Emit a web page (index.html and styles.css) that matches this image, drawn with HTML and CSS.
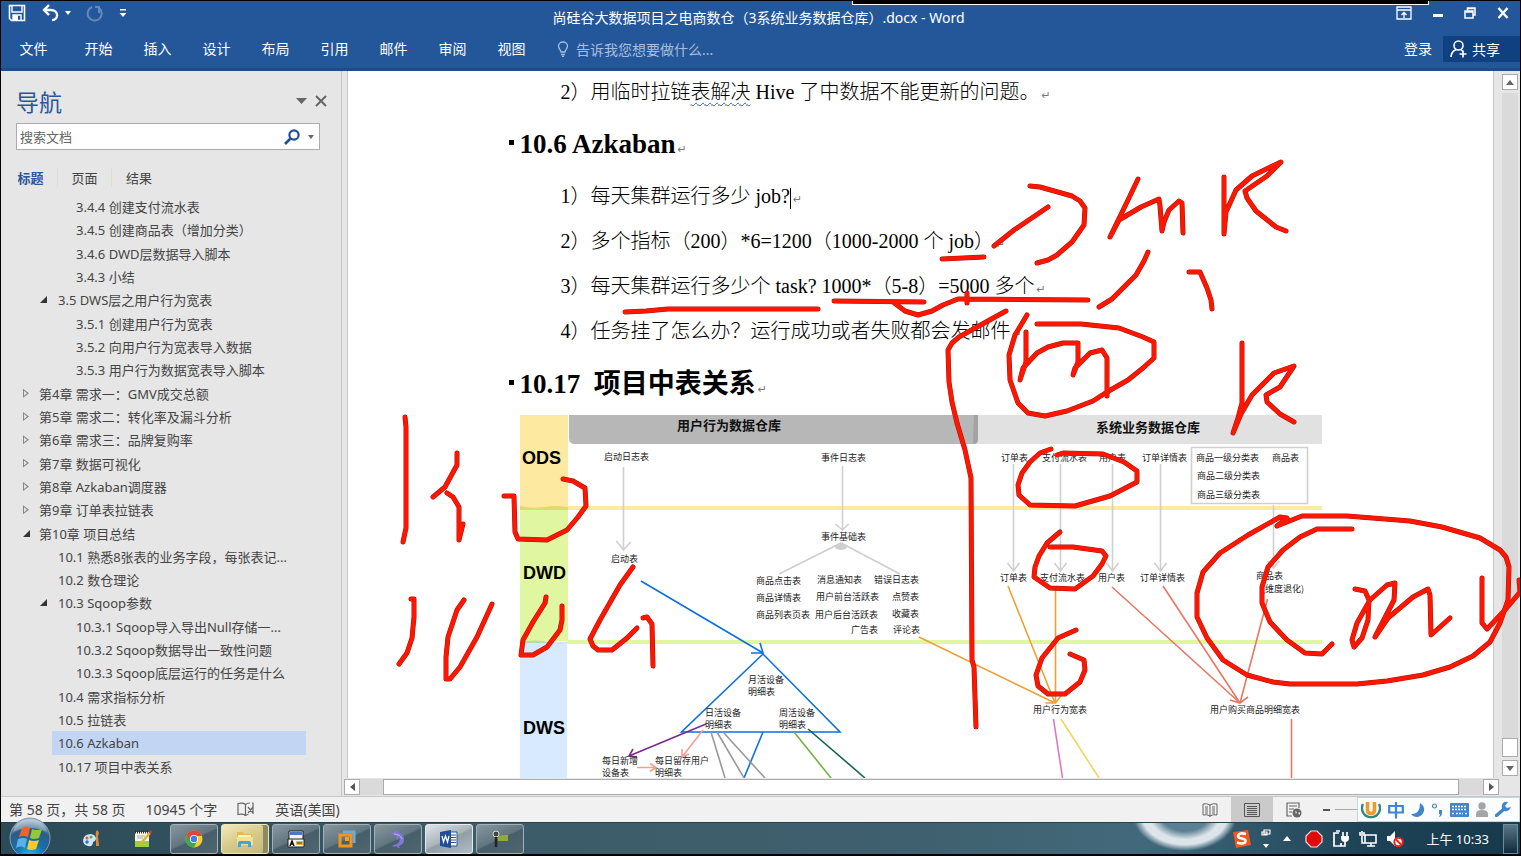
FILE: index.html
```html
<!DOCTYPE html>
<html lang="zh-CN">
<head>
<meta charset="utf-8">
<title>尚硅谷大数据项目之电商数仓（3系统业务数据仓库）.docx - Word</title>
<link rel="stylesheet" href="styles.css">
</head>
<body>
<header class="ribbon">
  <div class="titlebar">
    <div class="quick">
      <button class="icon-btn" aria-label="保存"><svg width="18" height="18" viewBox="0 0 18 18"><path d="M1.500 1.500h15v15h-13l-2-2z" fill="none" stroke="#fff" stroke-width="1.600"/><path d="M4 2v6h10V2M5 16v-5h8v5" fill="none" stroke="#fff" stroke-width="1.400"/><path d="M5 11h5v5H5z" fill="#fff"/></svg></button>
      <button class="icon-btn" aria-label="撤消"><svg width="30" height="18" viewBox="0 0 30 18"><path d="M8 1L3 6l5 5M3 6h7c8 0 8 10 1 10" fill="none" stroke="#fff" stroke-width="2.400"/><path d="M24 7h6l-3 4z" fill="#fff"/></svg></button>
      <button class="icon-btn" aria-label="重复"><svg width="18" height="18" viewBox="0 0 18 18"><path d="M6 3a7 7 0 1 0 7 1M13 9V3H9" fill="none" stroke="#6488bd" stroke-width="2"/></svg></button>
      <button class="icon-btn" aria-label="自定义"><svg width="8" height="10" viewBox="0 0 8 10"><path d="M1 1h6v1.500H1zM0.500 5h7L4 9z" fill="#fff"/></svg></button>
    </div>
    <h1 class="doc-title">尚硅谷大数据项目之电商数仓（3系统业务数据仓库）.docx - Word</h1>
    <div class="window-btns">
      <button class="icon-btn" aria-label="功能区选项"><svg width="16" height="14" viewBox="0 0 16 14"><path d="M1 1h14v12H1zM1 4h14M8 12V7M5.500 9L8 6.500 10.500 9" fill="none" stroke="#fff" stroke-width="1.300"/></svg></button>
      <button class="icon-btn" aria-label="最小化"><svg width="10" height="14" viewBox="0 0 10 14"><path d="M0 8h10v3H0z" fill="#fff"/></svg></button>
      <button class="icon-btn" aria-label="还原"><svg width="12" height="14" viewBox="0 0 12 14"><path d="M1 5h8v7H1zM3.500 4.500V2H11v7H9.500M1 6h8M4 2.600h7" fill="none" stroke="#fff" stroke-width="1.500"/></svg></button>
      <button class="icon-btn" aria-label="关闭"><svg width="12" height="14" viewBox="0 0 12 14"><path d="M1.500 2l9 10M10.500 2l-9 10" stroke="#fff" stroke-width="2.400"/></svg></button>
    </div>
    <div class="share-strip"></div>
  </div>
  <nav class="tabs">
    <button class="tab tab-file">文件</button>
    <button class="tab">开始</button>
    <button class="tab">插入</button>
    <button class="tab">设计</button>
    <button class="tab">布局</button>
    <button class="tab">引用</button>
    <button class="tab">邮件</button>
    <button class="tab">审阅</button>
    <button class="tab">视图</button>
    <button class="tell-me"><svg width="12" height="16" viewBox="0 0 12 16"><path d="M4 11C4 9 1.500 8 1.500 5a4.500 4 0 0 1 9 0C10.500 8 8 9 8 11zM4 13.500h4M5 15.300h2" fill="none" stroke="#a9bedd" stroke-width="1.300"/></svg>告诉我您想要做什么...</button>
    <button class="tab login">登录</button>
    <button class="share"><svg width="18" height="18" viewBox="0 0 18 18"><circle cx="8.500" cy="5.500" r="4.500" fill="none" stroke="#fff" stroke-width="1.600"/><path d="M1 17c0-4 2-6 5-7.500M11 9.500l2 2M13 10.500v7M9.500 14h7" fill="none" stroke="#fff" stroke-width="1.700"/></svg>共享</button>
  </nav>
</header>

<main class="work">
  <aside class="nav-pane">
    <div class="nav-head">
      <h2>导航</h2>
      <button class="icon-btn" aria-label="选项"><svg width="11" height="6" viewBox="0 0 11 6"><path d="M0 0h11L5.500 6z" fill="#666"/></svg></button>
      <button class="icon-btn" aria-label="关闭导航"><svg width="12" height="12" viewBox="0 0 12 12"><path d="M1 1l10 10M11 1L1 11" stroke="#666" stroke-width="2"/></svg></button>
    </div>
    <div class="search">
      <input type="text" placeholder="搜索文档" aria-label="搜索文档">
      <svg width="16" height="16" viewBox="0 0 16 16"><circle cx="10" cy="6" r="4.600" fill="none" stroke="#1f4e9c" stroke-width="2.200"/><path d="M6.500 9.500L1 15" stroke="#1f4e9c" stroke-width="2.600"/></svg>
      <svg width="6" height="4" viewBox="0 0 6 4"><path d="M0 0h6L3 4z" fill="#666"/></svg>
    </div>
    <div class="nav-tabs">
      <button class="on">标题</button><button>页面</button><button>结果</button>
    </div>
    <ul class="tree">
      <li class="l3"><a href="#">3.4.4 创建支付流水表</a></li>
      <li class="l3"><a href="#">3.4.5 创建商品表（增加分类）</a></li>
      <li class="l3"><a href="#">3.4.6 DWD层数据导入脚本</a></li>
      <li class="l3"><a href="#">3.4.3 小结</a></li>
      <li class="l2 open"><a href="#">3.5 DWS层之用户行为宽表</a></li>
      <li class="l3"><a href="#">3.5.1 创建用户行为宽表</a></li>
      <li class="l3"><a href="#">3.5.2 向用户行为宽表导入数据</a></li>
      <li class="l3"><a href="#">3.5.3 用户行为数据宽表导入脚本</a></li>
      <li class="l1 shut"><a href="#">第4章 需求一：GMV成交总额</a></li>
      <li class="l1 shut"><a href="#">第5章 需求二：转化率及漏斗分析</a></li>
      <li class="l1 shut"><a href="#">第6章 需求三：品牌复购率</a></li>
      <li class="l1 shut"><a href="#">第7章 数据可视化</a></li>
      <li class="l1 shut"><a href="#">第8章 Azkaban调度器</a></li>
      <li class="l1 shut"><a href="#">第9章 订单表拉链表</a></li>
      <li class="l1 open"><a href="#">第10章 项目总结</a></li>
      <li class="l2"><a href="#">10.1 熟悉8张表的业务字段，每张表记...</a></li>
      <li class="l2"><a href="#">10.2 数仓理论</a></li>
      <li class="l2 open"><a href="#">10.3 Sqoop参数</a></li>
      <li class="l3"><a href="#">10.3.1 Sqoop导入导出Null存储一...</a></li>
      <li class="l3"><a href="#">10.3.2 Sqoop数据导出一致性问题</a></li>
      <li class="l3"><a href="#">10.3.3 Sqoop底层运行的任务是什么</a></li>
      <li class="l2"><a href="#">10.4 需求指标分析</a></li>
      <li class="l2"><a href="#">10.5 拉链表</a></li>
      <li class="l2 current"><a href="#">10.6 Azkaban</a></li>
      <li class="l2"><a href="#">10.17 项目中表关系</a></li>
    </ul>
  </aside>

  <section class="doc">
    <article class="page">
      <div class="column">
        <p class="first">2）用临时拉链<span class="wavy">表解决</span> Hive 了中数据不能更新的问题。<i>↵</i></p>
        <h3>10.6 Azkaban<i>↵</i></h3>
        <p>1）每天集群运行多少 job?<span class="caret"></span><i>↵</i></p>
        <p>2）多个指标（200）*6=1200（1000-2000 个 job）<i>↵</i></p>
        <p>3）每天集群运行多少个 task? 1000*（5-8）=5000 多个<i>↵</i></p>
        <p>4）任务挂了怎么办？运行成功或者失败都会发邮件<i>↵</i></p>
        <h3>10.17&nbsp; 项目中表关系<i>↵</i></h3>
        <svg class="diagram" viewBox="520 414 802 364">
          <path d="M520 415h48v92h-48z" fill="#fee9a0"/>
          <path d="M520 507h48v134h-48z" fill="#e0f6a1"/>
          <path d="M520 642h47v136h-47z" fill="#d7eaff"/>
          <path d="M568 506h754v4H568z" fill="#fee9a0"/>
          <path d="M520 506q12 3 24 1t24 0v3h-48z" fill="#dedb70"/>
          <path d="M567 640h755v4H567z" fill="#e0f6a1"/>
          <path d="M520 642q16-3 30 0t17 0v1h-47z" fill="#b8dbb0"/>
          <path d="M974 415h348v29H974z" fill="#e1e1e1"/>
          <path d="M569 415h409v24q0 5-5 5H575q-6 0-6-6z" fill="#b7b7b7"/>
          <path d="M974 415h4v24q0 5-5 5z" fill="#a2a2a2"/>
          <g class="layer"><text x="522" y="464">ODS</text><text x="523" y="579">DWD</text><text x="523" y="734">DWS</text></g>
          <g class="head"><text x="677" y="430">用户行为数据仓库</text><text x="1096" y="432">系统业务数据仓库</text></g>
          <g fill="none" stroke-width="1.600" stroke="#cfcfcf">
            <path d="M623.500 467v83m-7-9l7 9 7-8M842.500 466v64m-7-6l7 6 6-6M779 574l62-31 59 31"/>
            <path d="M1013.500 464v107m-6-8l6 8 6-8M1060.500 464v107m-6-8l6 8 6-8M1112.500 464v107m-6-8l6 8 6-8M1160.500 464v107m-6-8l6 8 6-8M1273.500 505v63m-6-7l6 7 6-7"/>
            <path d="M1191.500 447.500h116v56h-116z"/>
          </g>
          <ellipse cx="841" cy="547" rx="6" ry="3" fill="#cfcfcf"/>
          <g fill="none" stroke-width="1.600">
            <path stroke="#0d70dd" d="M641 581l122 72m-12 0l12 0-3-10M763 654l-81.500 78H840zM763 732l-19 46"/>
            <path stroke="#999" d="M711 732l14 46M717 732l27 46M723 732l42 46"/>
            <path stroke="#76b041" d="M794 732l37 46"/>
            <path stroke="#12664f" d="M808 729l57 49"/>
            <path stroke="#7b2a8c" d="M706 724l-77 32m4-7l-4 7 8 1"/>
            <path stroke="#f2a092" d="M703 730l-21 27m0-8v8l7-3M637 767.500h19m-6-4l6 4-6 4"/>
            <path stroke="#eda035" d="M919 637l136 66M1008 586l47 117M1055.500 588v115m-10 0h10l6-8"/>
            <path stroke="#df77c1" d="M1053.500 719l9 59"/>
            <path stroke="#f3d55c" d="M1061 719l38 59"/>
            <path stroke="#e87763" d="M1112 587l128 116M1163 586l77 117M1267.500 599L1240 703m-10-3l10 3 8-6M1291.500 719v59"/>
          </g>
          <g class="node">
            <text x="604" y="460">启动日志表</text><text x="611" y="562">启动表</text>
            <text x="821" y="461">事件日志表</text><text x="821" y="540">事件基础表</text>
            <text x="756" y="584">商品点击表</text><text x="756" y="601">商品详情表</text><text x="756" y="618">商品列表页表</text>
            <text x="817" y="583">消息通知表</text><text x="816" y="600">用户前台活跃表</text><text x="815" y="618">用户后台活跃表</text><text x="851" y="633">广告表</text>
            <text x="874" y="583">错误日志表</text><text x="892" y="600">点赞表</text><text x="892" y="617">收藏表</text><text x="893" y="633">评论表</text>
            <text x="748" y="683">月活设备</text><text x="748" y="695">明细表</text>
            <text x="705" y="716">日活设备</text><text x="705" y="728">明细表</text>
            <text x="779" y="716">周活设备</text><text x="779" y="728">明细表</text>
            <text x="602" y="764">每日新增</text><text x="602" y="776">设备表</text>
            <text x="655" y="764">每日留存用户</text><text x="655" y="776">明细表</text>
            <text x="1001" y="461">订单表</text><text x="1042" y="461">支付流水表</text><text x="1099" y="461">用户表</text><text x="1142" y="461">订单详情表</text>
            <text x="1196" y="461">商品一级分类表</text><text x="1197" y="479">商品二级分类表</text><text x="1197" y="498">商品三级分类表</text><text x="1272" y="461">商品表</text>
            <text x="1000" y="581">订单表</text><text x="1040" y="581">支付流水表</text><text x="1098" y="581">用户表</text><text x="1140" y="581">订单详情表</text>
            <text x="1256" y="579">商品表</text><text x="1262" y="592">(维度退化)</text>
            <text x="1033" y="713">用户行为宽表</text><text x="1210" y="713">用户购买商品明细宽表</text>
          </g>
        </svg>
      </div>
    </article>
    <div class="vbar">
      <button aria-label="向上"><svg width="8" height="5" viewBox="0 0 8 5"><path d="M0 5h8L4 0z" fill="#666"/></svg></button>
      <div class="vtrack"><div class="vthumb"></div></div>
      <button aria-label="向下"><svg width="8" height="5" viewBox="0 0 8 5"><path d="M0 0h8L4 5z" fill="#666"/></svg></button>
    </div>
    <div class="hbar">
      <button aria-label="向左"><svg width="5" height="8" viewBox="0 0 5 8"><path d="M5 0v8L0 4z" fill="#555"/></svg></button>
      <div class="htrack"><div class="hthumb"></div></div>
      <button aria-label="向右"><svg width="5" height="8" viewBox="0 0 5 8"><path d="M0 0v8l5-4z" fill="#555"/></svg></button>
    </div>
  </section>
</main>

<footer class="status">
  <span>第 58 页，共 58 页</span>
  <span>10945 个字</span>
  <svg width="18" height="15" viewBox="0 0 18 15"><path d="M8.500 2.500Q6 .5 1 1.500v11q5-1 7.500 1 1-1 3-1M8.500 2.500v11M8.500 2.500Q10 1 13 1M11 5l5 6M16 5l-5 6M15 1h1v11" fill="none" stroke="#666" stroke-width="1.200"/></svg>
  <span>英语(美国)</span>
  <div class="views">
    <button aria-label="阅读视图"><svg width="16" height="16" viewBox="0 0 16 16"><path d="M8 3Q5 1 1 2v11q4-1 7 1 3-2 7-1V2q-4-1-7 1zM8 3v12M3 5h3M3 7h3M3 9h3M3 11h3M10 5h3M10 7h3M10 9h3M10 11h3" fill="none" stroke="#666" stroke-width="1"/></svg></button>
    <button class="on" aria-label="页面视图"><svg width="16" height="16" viewBox="0 0 16 16"><path d="M.5 1.500h15v13H.5zM3 4.500h10M3 6.500h10M3 8.500h10M3 10.500h10M3 12.500h10" fill="none" stroke="#555" stroke-width="1"/></svg></button>
    <button aria-label="Web 版式"><svg width="16" height="16" viewBox="0 0 16 16"><path d="M6 14H1V1h12v5M3 4h8M3 7h5M3 10h3" fill="none" stroke="#666" stroke-width="1.200"/><circle cx="11" cy="11" r="4.500" fill="#666"/><path d="M9 9l2 1-1 2zM12 11l2-1v3z" fill="#eee"/></svg></button>
  </div>
  <button class="zoom-out" aria-label="缩小"></button>
  <div class="zoom-line"></div>
  <div class="ime">
    <svg width="20" height="20" viewBox="0 0 20 20"><path d="M2 4a9 9 0 1 0 16 0" fill="none" stroke="#2f8a7a" stroke-width="2.400"/><path d="M6.500 2v8q0 3.500 3.500 3.500t3.500-3.500V2" fill="none" stroke="#f19a2b" stroke-width="3.600"/></svg>
    <svg width="16" height="18" viewBox="0 0 16 18"><path d="M1.200 5h13.600v6.500H1.200zM8 1v16.500" fill="none" stroke="#3f85cf" stroke-width="2.200"/></svg>
    <svg width="14" height="14" viewBox="0 0 14 14"><path d="M9 0q5 3 4 8-2 6-8 6-3 0-5-3 9 1 9-11z" fill="#3f85cf"/></svg>
    <svg width="12" height="14" viewBox="0 0 12 14"><circle cx="3.500" cy="3" r="2" fill="none" stroke="#3f85cf" stroke-width="1.200"/><path d="M8 7h3v3q0 3-3 4 1-2 1-3H8z" fill="#3f85cf"/></svg>
    <svg width="19" height="14" viewBox="0 0 19 14"><rect width="19" height="14" rx="1" fill="#3f85cf"/><path d="M2 3.500h15M2 6.500h15M2 10.500h2M6 10.500h7M15 10.500h2" stroke="#fff" stroke-width="1.600" stroke-dasharray="2 1"/></svg>
    <svg width="12" height="15" viewBox="0 0 12 15"><circle cx="6" cy="4" r="3.700" fill="#a5a5a5"/><path d="M0 15v-3q0-4 6-4t6 4v3z" fill="#a5a5a5"/></svg>
    <svg width="16" height="15" viewBox="0 0 16 15"><path d="M1.500 13.500L9 7" stroke="#3f85cf" stroke-width="3.400" stroke-linecap="round"/><path d="M13 0q-5-1-6 3t2 6q5 1 7-4l-4 1-2-2z" fill="#3f85cf"/></svg>
  </div>
</footer>

<footer class="taskbar">
  <button class="orb" aria-label="开始菜单"><svg width="42" height="42" viewBox="0 0 42 42"><defs><radialGradient id="orb" cx=".5" cy="1" r=".95"><stop offset="0" stop-color="#23c6f5"/><stop offset=".4" stop-color="#1672ad"/><stop offset=".75" stop-color="#2b5c85"/><stop offset="1" stop-color="#9fb9cc"/></radialGradient></defs><circle cx="21" cy="21" r="20" fill="url(#orb)" stroke="#7f9db1" stroke-width="1"/><path d="M4 15Q7 3 21 2q14 1 17 13-17-8-34 0z" fill="#fff" opacity=".28"/><path d="M13 11q5-3 8 0l-2 9q-4-2-9 0z" fill="#f0632a"/><path d="M23 12q4 2 10 0l-3 9q-5 2-9 0z" fill="#94c83d"/><path d="M9 22q6-2 9 0l-2 9q-4-3-9 0z" fill="#59b0ea"/><path d="M20 23q5 2 10 0l-3 9q-5 2-9 0z" fill="#fcc82c"/></svg></button>
  <button class="pin" aria-label="画图"><svg width="20" height="20" viewBox="0 0 20 20"><path d="M1 11q1-6 8-6 5 1 5 5-1 3-3 3 0 5-5 4-5-1-5-6z" fill="#cfe6f5"/><circle cx="5" cy="9" r="1.500" fill="#e8543f"/><circle cx="9" cy="8" r="1.500" fill="#52b043"/><circle cx="5" cy="13" r="1.700" fill="#2a77cc"/><path d="M15 1q3 2 1 6l1 10h-3V7q-1-4 1-6z" fill="#e08a35"/></svg></button>
  <button class="pin" aria-label="记事本"><svg width="20" height="20" viewBox="0 0 20 20"><path d="M2 3h14v14H2z" fill="#f7f7e8"/><path d="M2 12h14v6H2z" fill="#9bd03e"/><path d="M2 3h14" stroke="#333" stroke-width="3" stroke-dasharray="1 1"/><path d="M4 7h8M4 9h6" stroke="#aaa"/><path d="M17 4l-8 9-1 3" fill="none" stroke="#e7b32e" stroke-width="2.500"/><path d="M16 3l2-2 1 2-2 2z" fill="#d33"/></svg></button>
  <button class="app" aria-label="Chrome"><svg width="18" height="18" viewBox="0 0 18 18"><circle cx="9" cy="9" r="8.500" fill="#f7cc2f"/><path d="M1.500 5A8.500 8.500 0 0 1 17 6H9l-4 5z" fill="#e2453a"/><path d="M1.500 5A8.500 8.500 0 0 0 9 17.500l3-6-6-.5z" fill="#3fa753"/><circle cx="9" cy="9" r="4" fill="#fff"/><circle cx="9" cy="9" r="3.200" fill="#3c80e8"/></svg></button>
  <button class="app folder" aria-label="资源管理器"><svg width="20" height="18" viewBox="0 0 20 18"><path d="M2 2h6l1 2h8v11H2z" fill="#e5b94a"/><path d="M3 5h13v3H3z" fill="#fff3c4"/><path d="M2 7h16v8H2z" fill="#f9df8c"/><path d="M3 17v-4q0-2 2-2h9q2 0 2 2v4h-3v-3H6v3z" fill="#3fa5de"/></svg></button>
  <button class="app" aria-label="工具"><svg width="18" height="18" viewBox="0 0 18 18"><path d="M2 1h14v10H2z" fill="#f4f4f4" stroke="#222"/><path d="M3 2h12v3H3z" fill="#4b79bd"/><path d="M1 9h16v8H1z" fill="#f5f5f5" stroke="#222"/><path d="M3 16l2-5 2 5M4 14h2" fill="none" stroke="#111" stroke-width="1.500"/><path d="M9 11h7v4H9z" fill="#f2b234"/><path d="M10 13h5" stroke="#333"/></svg></button>
  <button class="app" aria-label="VMware"><svg width="18" height="18" viewBox="0 0 18 18"><path d="M5 2h11v11" fill="none" stroke="#71acd8" stroke-width="3"/><path d="M2 5h11v11H2z" fill="none" stroke="#f39321" stroke-width="3"/><path d="M7 7h4v4H7z" fill="#e7a33c"/></svg></button>
  <button class="app" aria-label="海豚"><svg width="18" height="18" viewBox="0 0 18 18"><path d="M1 4q2-1 4-2 2-2 4-1l-1 1q6 1 7 6 1 6-5 8l1 2q-3 0-4-2-2 1-4 0 3-2 5-2 4-3 2-7l-1 3q-2-1-2-4-3-1-6-2z" fill="#7f78d2"/><path d="M5 4q6 0 8 5" stroke="#b8b3e4" fill="none"/></svg></button>
  <button class="app active" aria-label="Word"><svg width="18" height="18" viewBox="0 0 18 18"><path d="M9 2h8v14H9z" fill="#fff" stroke="#2b579a"/><path d="M11 5h5M11 7.500h5M11 10h5M11 12.500h5" stroke="#2b579a"/><path d="M0 2l11-2v18L0 16z" fill="#1f4e98"/><path d="M2 6l1.500 6L5.500 6l2 6L9 6" fill="none" stroke="#fff" stroke-width="1.300"/></svg></button>
  <button class="app" aria-label="钥匙"><svg width="18" height="18" viewBox="0 0 18 18"><circle cx="5" cy="4" r="3" fill="#444" stroke="#ddd"/><path d="M5 7v10" stroke="#222" stroke-width="2.500"/><path d="M7 6h3v5H7zM10 5h7v6h-7z" fill="#91a83b"/></svg></button>
  <div class="tray">
    <svg width="20" height="20" viewBox="0 0 20 20"><path d="M1 3l15-2 3 15-15 3z" fill="#f1571c"/><path d="M14 5Q7 3 6 7q0 2 4 2.500 5 1 3 4-3 2-8 0" fill="none" stroke="#fff" stroke-width="2.600"/></svg>
    <svg width="10" height="20" viewBox="0 0 10 20"><path d="M3 1h6v4H3zM1 3h5v3H1z" fill="none" stroke="#fff" stroke-width="1.200"/><path d="M2 15h6l-3 4z" fill="#fff"/></svg>
    <svg class="more" width="8" height="5" viewBox="0 0 8 5"><path d="M0 5h8L4 0z" fill="#fff"/></svg>
    <svg width="18" height="18" viewBox="0 0 18 18"><path d="M6 1h6l5 5v6l-5 5H6l-5-5V6z" fill="#e00b0b" stroke="#f2dcdc" stroke-width="1.200"/></svg>
    <svg width="18" height="18" viewBox="0 0 18 18"><path d="M7 3H2v13h7v-3M4 1h4M11 2v4M15 2v4M13 12v4H9" fill="none" stroke="#fff" stroke-width="1.700"/><path d="M9 6h8v2q0 4-4 4t-4-4z" fill="#fff"/></svg>
    <svg width="18" height="18" viewBox="0 0 18 18"><path d="M6 5h11v8H6zM8 16h8M12 13v3M3 6v7h3M1 2v3h4V2M3 1v3" fill="none" stroke="#fff" stroke-width="1.600"/></svg>
    <svg width="18" height="18" viewBox="0 0 18 18"><path d="M1 6h3l5-5v15l-5-5H1z" fill="#fff"/><circle cx="12.500" cy="12" r="4.200" fill="#fff" stroke="#de2b1f" stroke-width="2"/><path d="M9.500 9l6 6" stroke="#de2b1f" stroke-width="2"/></svg>
    <time>上午 10:33</time>
    <button class="peek" aria-label="显示桌面"></button>
  </div>
</footer>

<svg class="ink" viewBox="0 0 1521 856" preserveAspectRatio="xMinYMin meet" aria-hidden="true">
  <defs><g id="strokes">
    <path d="M942 259L984 257M994 246L1014 230 1048 207M1030 186L1040 187 1072 196 1080 201 1085 208 1084 225 1072 242 1057 255 1048 260 1037 263"/>
    <path d="M1138 179L1128 200 1110 237 1119 220 1141 207 1159 199 1160 206 1162 231 1164 222 1169 210 1179 201 1182 203 1183 233"/>
    <path d="M1224 177V234L1226 212 1236 190 1252 176 1281 162 1267 176 1245 191 1247 198 1256 211 1276 227 1286 231"/>
    <path d="M1148 252L1144 261 1136 275 1112 299 1099 307M1189 272H1200L1207 288 1211 300 1212 309"/>
    <path d="M625 312L646 311 668 309H818M834 301L924 302M893 302L905 311 918 315 932 311 943 305 958 299H967V293 303 299L1088 300"/>
    <path d="M1006 311L986 322 959 337 952 343 948 350 949 382 952 402 957 423 965 450 971 478 972 660 974 667 976 727"/>
    <path d="M1027 315L1015 335 1009 355 1010 380 1018 403 1028 413 1045 416 1067 411 1093 401 1107 392 1128 380 1143 368 1154 358V342L1143 337 1119 328 1081 324 1037 324"/>
    <path d="M1026 332V362L1020 380 1023 368 1037 353 1048 347 1063 343H1078V362L1073 375 1075 368 1090 353 1102 350 1107 358V396"/>
    <path d="M1242 343V403L1238 418 1233 433 1241 414 1252 395 1274 373 1294 366 1280 387 1266 395 1267 402 1280 414 1294 422"/>
    <path d="M1051 449L1040 453 1030 462 1022 473 1018 485 1019 495 1030 505 1075 506 1110 496 1137 482V471L1124 462 1103 454 1063 453 1057 455"/>
    <path d="M1060 532L1047 543 1039 556 1035 567 1034 577 1050 588 1075 589 1093 576 1102 564 1106 556 1102 551 1073 547H1050"/>
    <path d="M1076 630L1058 638 1042 658 1036 675 1038 686 1048 694H1065L1080 682 1085 670 1084 660 1070 654"/>
    <path d="M405 417L406 427V528L403 542M457 453V465L445 487 433 497M447 493L453 497 459 507V540L463 524"/>
    <path d="M504 496H514L515 532 518 539 547 540 567 530 578 517 586 506 585 488 573 481 563 479"/>
    <path d="M411 599H414V617L412 638 407 653 399 664M464 600L457 610 448 637 446 657V679H450L460 667 477 637 492 604"/>
    <path d="M546 597L545 603 533 622 523 640 521 655H533L547 647 560 630 562 620V606"/>
    <path d="M633 567L620 585 600 620 590 639 593 646 598 650H612L627 638 637 628M643 618L647 617 652 624 653 666"/>
    <path d="M1277 526L1287 518 1280 517 1248 535 1220 553 1203 572 1197 593V617L1207 638 1223 660 1247 675 1273 682 1290 684H1357L1387 681 1423 675 1450 667 1473 656 1490 642 1500 623 1508 600 1509 567 1506 557 1500 550 1480 538 1442 527 1410 521 1347 516H1302L1277 526"/>
    <path d="M1352 529H1317L1300 537 1283 550 1268 567 1262 587V603L1270 622 1287 640 1305 653 1322 654 1332 644"/>
    <path d="M1355 589L1365 591 1369 600 1368 620 1362 638 1354 647 1352 640 1357 623 1370 600 1387 585 1395 583 1394 600 1375 637 1388 618 1413 597 1428 589 1430 595 1431 635 1450 618"/>
    <path d="M1482 578V623L1487 629 1505 610 1520 592 1519 580"/>
  </g></defs>
  <use href="#strokes" class="ink-edge"/>
  <use href="#strokes" class="ink-core"/>
</svg>
</body>
</html>
```

FILE: styles.css
```css
* { box-sizing: border-box; }

body {
  margin: 0;
  height: 100vh;
  display: flex;
  flex-direction: column;
  overflow: hidden;
  position: relative;
  border: 1px solid #000;
  border-bottom-width: 2px;
  background: #e6e6e6;
  color: #444;
  font: 13px "Noto Sans", "Noto Sans CJK SC", sans-serif;
}

h1, h2, h3, p, ul { margin: 0; padding: 0; }
button { font: inherit; color: inherit; background: none; border: 0; padding: 0; }
svg { display: block; flex: none; }

/* ribbon */
.ribbon {
  flex: none;
  height: 70px;
  background: #245799;
  border-bottom: 3px solid #1d4c8b;
  color: #fff;
}
.titlebar {
  height: 33px;
  display: flex;
  justify-content: space-between;
  position: relative;
}
.quick { flex: 1; display: flex; align-items: center; gap: 15px; padding: 0 0 9px 7px; }
.doc-title { font-size: 14px; font-weight: 400; line-height: 34px; white-space: nowrap; }
.window-btns { flex: 1; display: flex; justify-content: flex-end; align-items: center; gap: 21px; padding: 0 11px 9px 0; }
.share-strip {
  position: absolute;
  top: -1px;
  left: 56%;
  right: 6%;
  height: 5px;
  background: #000;
  border: 1px solid #fff;
  border-top: 0;
}
.tabs { display: flex; align-items: center; height: 29px; font-size: 14px; padding-left: 3px; }
.tab { width: 59px; line-height: 26px; flex: none; }
.tab-file { margin-right: 6px; }
.tell-me { display: flex; align-items: center; gap: 7px; margin-left: 16px; color: #a9bedd; }
.login { margin-left: auto; width: 50px; }
.share {
  display: flex;
  align-items: center;
  gap: 4px;
  height: 26px;
  width: 77px;
  padding-left: 7px;
  background: #0f4080;
}

/* navigation pane */
.work { flex: 1; min-height: 0; display: flex; }
.nav-pane {
  width: 341px;
  flex: none;
  display: flex;
  flex-direction: column;
  padding: 11px 21px 18px 0;
  border-right: 1px solid #c6c6c6;
}
.nav-head { display: flex; align-items: center; gap: 8px; padding: 0 0 4px 15px; height: 41px; margin-right: -7px; }
.nav-head h2 { flex: 1; font-size: 23px; font-weight: 400; color: #2a5699; }
.search {
  display: flex;
  align-items: center;
  gap: 8px;
  height: 27px;
  margin-left: 15px;
  padding: 0 5px 0 3px;
  background: #fff;
  border: 1px solid #ababab;
}
.search input { flex: 1; min-width: 0; border: 0; padding: 0; outline: 0; font: inherit; }
.search input::placeholder { color: #666; opacity: 1; }
.nav-tabs { display: flex; height: 45px; align-items: center; padding-left: 3px; padding-top: 9px; }
.nav-tabs button { width: 54px; border-right: 1px solid #dcdcdc; }
.nav-tabs button:last-child { border: 0; }
.nav-tabs .on { color: #2a5699; font-weight: 700; }
.tree { flex: 1; min-height: 0; display: flex; flex-direction: column; list-style: none; }
.tree li { flex: 1; display: flex; align-items: center; position: relative; margin-right: 14px; }
.tree a { color: inherit; text-decoration: none; white-space: nowrap; }
.l1 { padding-left: 16px; margin-left: 22px; }
.l2 { padding-left: 6px; margin-left: 51px; }
.l3 { padding-left: 24px; margin-left: 51px; }
.open::before, .shut::before { content: ""; position: absolute; }
.l1::before { left: 0; }
.l2::before { left: -12px; }
.open::before { border-left: 7px solid transparent; border-bottom: 7px solid #333; }
.shut::before { width: 6px; height: 9px; background: #888; clip-path: polygon(0 0, 100% 50%, 0 100%, 0 0, 1px 2px, 1px 7px, 4px 50%, 1px 2px); }
.current { background: #c2d5f2; }

/* document */
.doc { flex: 1; min-width: 0; display: grid; grid-template-columns: 1fr 26px; grid-template-rows: 1fr 18px; }
.page {
  margin-left: 5px;
  min-height: 0;
  overflow: hidden;
  background: #fff;
  border-left: 1px solid #c6c6c6;
  border-right: 1px solid #c6c6c6;
  color: #000;
  font: 20px "Liberation Serif", "Noto Sans CJK SC", serif;
}
.column { max-width: 802px; margin: 0 auto; }
.column p { line-height: 45px; padding-left: 41px; white-space: nowrap; font-weight: 300; }
.column .first { line-height: 43px; }
.column h3 { font-size: 27px; line-height: 60px; position: relative; white-space: nowrap; }
.column h3::before { content: ""; position: absolute; left: -11px; top: 26px; width: 5px; height: 5px; background: #000; }
.column i { font: 11px "DejaVu Sans", sans-serif; color: #777; margin-left: 2px; }
.wavy { text-decoration: underline wavy #3355dd 1px; text-underline-offset: 3px; }
.caret { display: inline-block; width: 1px; height: 21px; background: #000; vertical-align: middle; }
.diagram { width: 100%; }
.diagram text { font-family: "Noto Sans CJK SC", sans-serif; fill: #222; }
.diagram .node text { font-size: 9px; }
.diagram .head text { font-size: 13px; font-weight: 700; fill: #111; }
.diagram .layer text { font: 700 18px "Liberation Sans", sans-serif; fill: #000; }

/* scroll bars */
.vbar { display: flex; flex-direction: column; width: 16px; margin: 3px 0 2px 8px; gap: 3px; }
.vbar button, .hbar button {
  width: 16px;
  height: 16px;
  flex: none;
  display: grid;
  place-items: center;
  background: #fff;
  border: 1px solid #ababab;
}
.vtrack { flex: 1; display: flex; align-items: flex-end; background: #dadada; }
.vthumb { width: 16px; height: 19px; background: #fff; border: 1px solid #ababab; }
.hbar { grid-column: 1 / 3; display: flex; padding: 1px 21px 1px 2px; }
.htrack { flex: 1; display: flex; padding: 0 24px 0 23px; background: #dadada; }
.hthumb { flex: 1; background: #fff; border: 1px solid #ababab; }

/* status bar */
.status {
  flex: none;
  height: 26px;
  display: flex;
  align-items: center;
  gap: 20px;
  padding-left: 8px;
  background: #f1f1f1;
  border-top: 1px solid #c6c6c6;
  white-space: nowrap;
  font-size: 14px;
  line-height: 20px;
}
.views { margin-left: auto; display: flex; align-self: stretch; }
.views button { width: 42px; display: grid; place-items: center; }
.views .on { background: #cacaca; }
.zoom-out { width: 7px; height: 2px; background: #555; margin-left: -12px; }
.zoom-line { width: 22px; height: 1px; background: #aaa; margin: 0 -20px 0 -15px; }
.ime {
  width: 163px;
  align-self: stretch;
  display: flex;
  align-items: center;
  justify-content: space-between;
  padding: 0 8px 0 3px;
  background: #fbfdff;
  border: 1px solid #c4d6e6;
}

/* taskbar */
.taskbar {
  flex: none;
  height: 32px;
  display: flex;
  align-items: center;
  gap: 3px;
  padding-left: 8px;
  color: #fff;
  background:
    radial-gradient(ellipse 52px 36px at 1184px -8px, #5b8093 0 45%, #dde5ea 68% 82%, transparent 100%),
    linear-gradient(90deg, #2b4a58, #3c5b68 30%, #3f606e 60%, #42697b 75%, #1d4256 90%, #16394c);
  border-top: 1px solid #24414f;
}
.orb { width: 42px; height: 42px; margin: -2px 14px 0 0; position: relative; }
.pin { width: 48px; display: grid; place-items: center; }
.app {
  width: 48px;
  height: 30px;
  display: grid;
  place-items: center;
  border: 1px solid #a2b0b7;
  border-radius: 3px;
  background: linear-gradient(155deg, #87979f, #627680 48%, #465f6b 52%, #50666f);
}
.folder { background: linear-gradient(155deg, #f2e9bd, #d6c988 50%, #c3b87e); border-color: #efe6bb; box-shadow: inset -5px 0 #8f8a63; }
.active { background: linear-gradient(155deg, #e0e5e8, #a9b4bb 48%, #8f9ea8 52%, #b2bdc4); border-color: #e5eaed; }
.tray { margin-left: auto; display: flex; align-items: center; gap: 9px; font-size: 13px; }
.tray .more { margin: 0 5px 0 3px; }
.tray time { margin-left: 13px; white-space: nowrap; }
.peek { width: 15px; height: 30px; margin: 0 2px 0 5px; border: 1px solid #6f8b98; background: linear-gradient(#5b7787, #0e2b3b); }

/* pen annotations lie over the whole window */
.ink { position: absolute; left: -1px; top: -1px; width: 100vw; height: 100vh; pointer-events: none; fill: none; stroke-linejoin: round; stroke-linecap: round; }
.ink-edge { stroke: #a3190c; stroke-width: 5px; }
.ink-core { stroke: #ff1600; stroke-width: 4px; }
```
